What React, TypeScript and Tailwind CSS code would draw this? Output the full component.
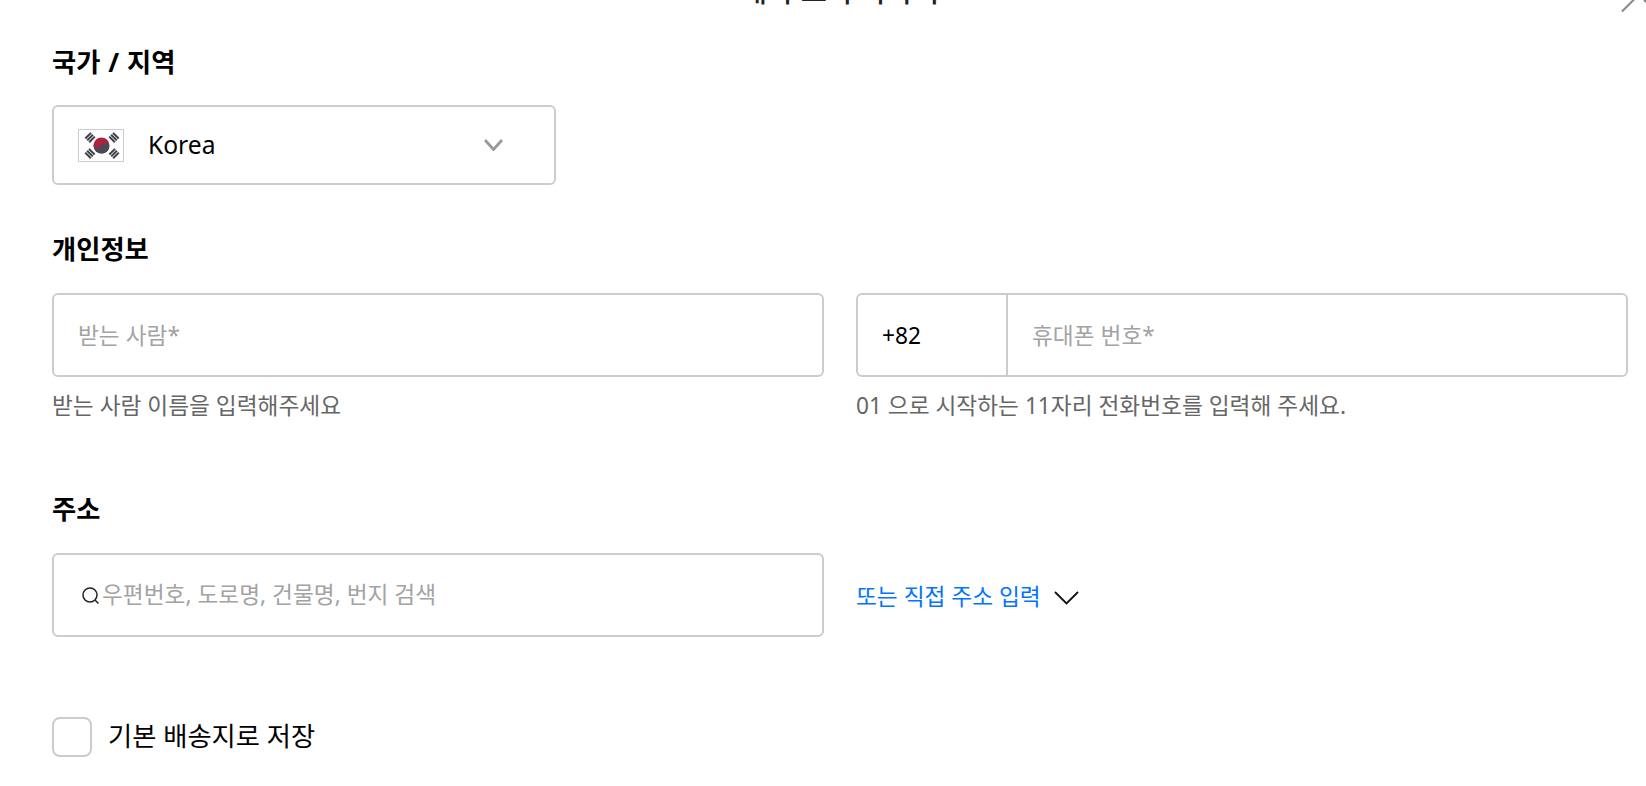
import React from "react";

function Flag() {
  const bars = (x: number, y: number, r: number) => (
    <g transform={`translate(${x} ${y}) rotate(${r})`} fill="#3c3f4a">
      <rect x="-4" y="-3.6" width="8" height="2" />
      <rect x="-4" y="-0.9" width="8" height="2" />
      <rect x="-4" y="1.8" width="8" height="2" />
    </g>
  );
  return (
    <svg width="46" height="33" viewBox="0 0 46 33" className="mt-[2px] shrink-0">
      <rect x="0.5" y="0.5" width="45" height="32" fill="#fff" stroke="#ccc" />
      {bars(12, 8.5, -45)}
      {bars(36, 8.5, 45)}
      {bars(12, 24.5, 45)}
      {bars(36, 24.5, -45)}
      <circle cx="23.5" cy="16.5" r="8" fill="#b0213f" />
      <path d="M15.5 16.5a8 8 0 0 0 16 0a4 4 0 0 0-8 0a4 4 0 0 1-8 0z" fill="#474a57" transform="rotate(25 23.5 16.5)" />
    </svg>
  );
}

function Chevron({ color, w, h, sw }: { color: string; w: number; h: number; sw: number }) {
  return (
    <svg width={w} height={h} viewBox={`0 0 ${w} ${h}`} fill="none" className="shrink-0">
      <path d={`M1 1 L${w / 2} ${h - 1.5} L${w - 1} 1`} stroke={color} strokeWidth={sw} />
    </svg>
  );
}

const Heading = ({ children, cls }: { children: React.ReactNode; cls: string }) => (
  <h2 className={`text-[26.3px] leading-[36px] font-bold text-black ${cls}`}>{children}</h2>
);

export default function App() {
  return (
    <div
      className="relative h-[786px] w-[1646px] overflow-hidden bg-white"
      style={{ fontFamily: '"Noto Sans", "Noto Sans CJK KR", sans-serif' }}
    >
      <svg width="30" height="14" viewBox="0 0 30 14" fill="none" className="absolute right-0 top-0">
        <path d="M6 11.5 L19 -1.5" stroke="#888" strokeWidth="2" />
        <path d="M28 0 L30 2" stroke="#888" strokeWidth="2" />
      </svg>

      <div className="pl-[52px] pr-[18px]">
        <div className="-mt-[27px] h-[36px] text-center text-[28.5px] leading-[36px] font-medium text-[#222]">
          새 주소 추가하기
        </div>
        <Heading cls="mt-[34.5px] [word-spacing:1px]">국가 / 지역</Heading>
        <div className="mt-[25px] flex h-[80px] w-[504px] items-center rounded-[6px] border-2 border-[#ccc] pl-[24px] pr-[51.5px]">
          <Flag />
          <span className="ml-[24px] flex-1 pt-[2px] text-[24.6px] text-black">Korea</span>
          <Chevron color="#999" w={19} h={12} sw={2.8} />
        </div>

        <Heading cls="mt-[46px]">개인정보</Heading>
        <div className="mt-[26px] grid grid-cols-2 gap-x-[32px]">
          <div>
            <div className="flex h-[84px] items-center rounded-[6px] border-2 border-[#ccc] pl-[24px] pt-[3px] text-[22.7px] text-[#a3a3a3]">
              받는 사람*
            </div>
            <p className="mt-[14px] text-[22.7px] leading-[30px] text-[#666]">받는 사람 이름을 입력해주세요</p>
          </div>
          <div>
            <div className="flex h-[84px] items-center rounded-[6px] border-2 border-[#ccc] text-[22.7px]">
              <div className="flex h-full w-[150px] items-center border-r-2 border-[#ccc] pl-[24px] pt-[3px] text-black">+82</div>
              <span className="pl-[24px] pt-[3px] text-[#a3a3a3]">휴대폰 번호*</span>
            </div>
            <p className="mt-[14px] text-[22.7px] leading-[30px] text-[#666]">01 으로 시작하는 11자리 전화번호를 입력해 주세요.</p>
          </div>
        </div>

        <Heading cls="mt-[70px]">주소</Heading>
        <div className="mt-[26px] grid grid-cols-2 gap-x-[32px]">
          <div className="flex h-[84px] items-center rounded-[6px] border-2 border-[#ccc] pl-[27px] pt-[2px] text-[22.7px] text-[#a3a3a3]">
            <svg width="20" height="20" viewBox="0 0 20 20" fill="none" className="mr-[1px] shrink-0">
              <circle cx="9" cy="9" r="7" stroke="#222" strokeWidth="1.5" />
              <path d="M14 14 L17.5 17.5" stroke="#222" strokeWidth="1.5" />
            </svg>
            우편번호, 도로명, 건물명, 번지 검색
          </div>
          <div className="flex items-center pt-[6px] text-[22.7px] text-[#0073ff]">
            또는 직접 주소 입력
            <span className="ml-[13px]"><Chevron color="#111" w={25} h={14} sw={1.8} /></span>
          </div>
        </div>

        <div className="mt-[80px] flex items-center">
          <div className="h-[40px] w-[40px] rounded-[8px] border-2 border-[#ccc]" />
          <span className="ml-[16px] text-[26.3px] text-black">기본 배송지로 저장</span>
        </div>
      </div>
    </div>
  );
}
